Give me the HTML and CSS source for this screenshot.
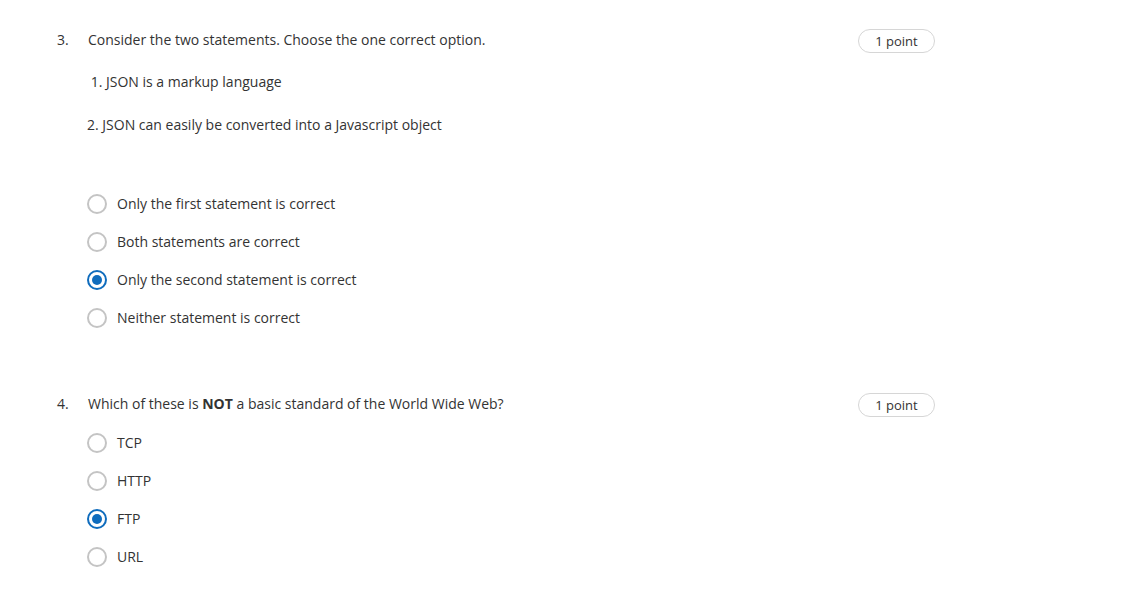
FILE: index.html
```html
<!DOCTYPE html>
<html>
<head>
<meta charset="utf-8">
<link rel="stylesheet" href="styles.css">
</head>
<body>
<main class="quiz">
  <section class="question q3">
    <div class="q-head">
      <span class="q-num">3.</span>
      <div class="q-text">Consider the two statements. Choose the one correct option.</div>
      <span class="badge">1 point</span>
    </div>
    <div class="q-body">
      <p class="stmt stmt1">&nbsp;1. JSON is a markup language</p>
      <p class="stmt stmt2">2. JSON can easily be converted into a Javascript object</p>
      <ul class="options first">
        <li class="option"><span class="radio"></span><span>Only the first statement is correct</span></li>
        <li class="option"><span class="radio"></span><span>Both statements are correct</span></li>
        <li class="option"><span class="radio checked"></span><span>Only the second statement is correct</span></li>
        <li class="option"><span class="radio"></span><span>Neither statement is correct</span></li>
      </ul>
    </div>
  </section>
  <section class="question q4">
    <div class="q-head">
      <span class="q-num">4.</span>
      <div class="q-text">Which of these is <b>NOT</b> a basic standard of the World Wide Web?</div>
      <span class="badge">1 point</span>
    </div>
    <div class="q-body">
      <ul class="options">
        <li class="option"><span class="radio"></span><span>TCP</span></li>
        <li class="option"><span class="radio"></span><span>HTTP</span></li>
        <li class="option"><span class="radio checked"></span><span>FTP</span></li>
        <li class="option"><span class="radio"></span><span>URL</span></li>
      </ul>
    </div>
  </section>
</main>
</body>
</html>
```

FILE: styles.css
```css
html, body {
  margin: 0;
  padding: 0;
  background: #ffffff;
}
body {
  font-family: "Open Sans", "Liberation Sans", sans-serif;
  font-size: 14px;
  line-height: 20px;
  color: #333333;
}
.quiz {
  width: 878px;
  padding: 30px 0 0 57px;
  display: flex;
  flex-direction: column;
  gap: 66px;
}
.q-head {
  display: flex;
  align-items: flex-start;
  height: 20px;
}
.q-num {
  width: 31px;
  flex: none;
}
.q-text {
  flex: 1;
}
.q-text b {
  font-weight: 700;
}
.badge {
  flex: none;
  width: 75px;
  height: 22px;
  margin-top: -1px;
  border: 1px solid #d6d6d6;
  border-radius: 12px;
  font-size: 13px;
  line-height: 22px;
  text-align: center;
  color: #333;
}
.q-body {
  padding-left: 30px;
}
.stmt {
  margin: 0;
}
.stmt1 {
  margin-top: 22px;
}
.stmt2 {
  margin-top: 23px;
}
.options {
  list-style: none;
  margin: 19px 0 0 0;
  padding: 0;
  display: flex;
  flex-direction: column;
  gap: 18px;
}
.options.first {
  margin-top: 59px;
}
.option {
  display: flex;
  align-items: center;
  gap: 10px;
  height: 20px;
}
.radio {
  box-sizing: border-box;
  width: 20px;
  height: 20px;
  border: 2px solid #c4c4c4;
  border-radius: 50%;
  display: flex;
  align-items: center;
  justify-content: center;
  flex: none;
}
.radio.checked {
  border-color: #0f6cbd;
}
.radio.checked::after {
  content: "";
  width: 10px;
  height: 10px;
  border-radius: 50%;
  background: #0f6cbd;
}
```
